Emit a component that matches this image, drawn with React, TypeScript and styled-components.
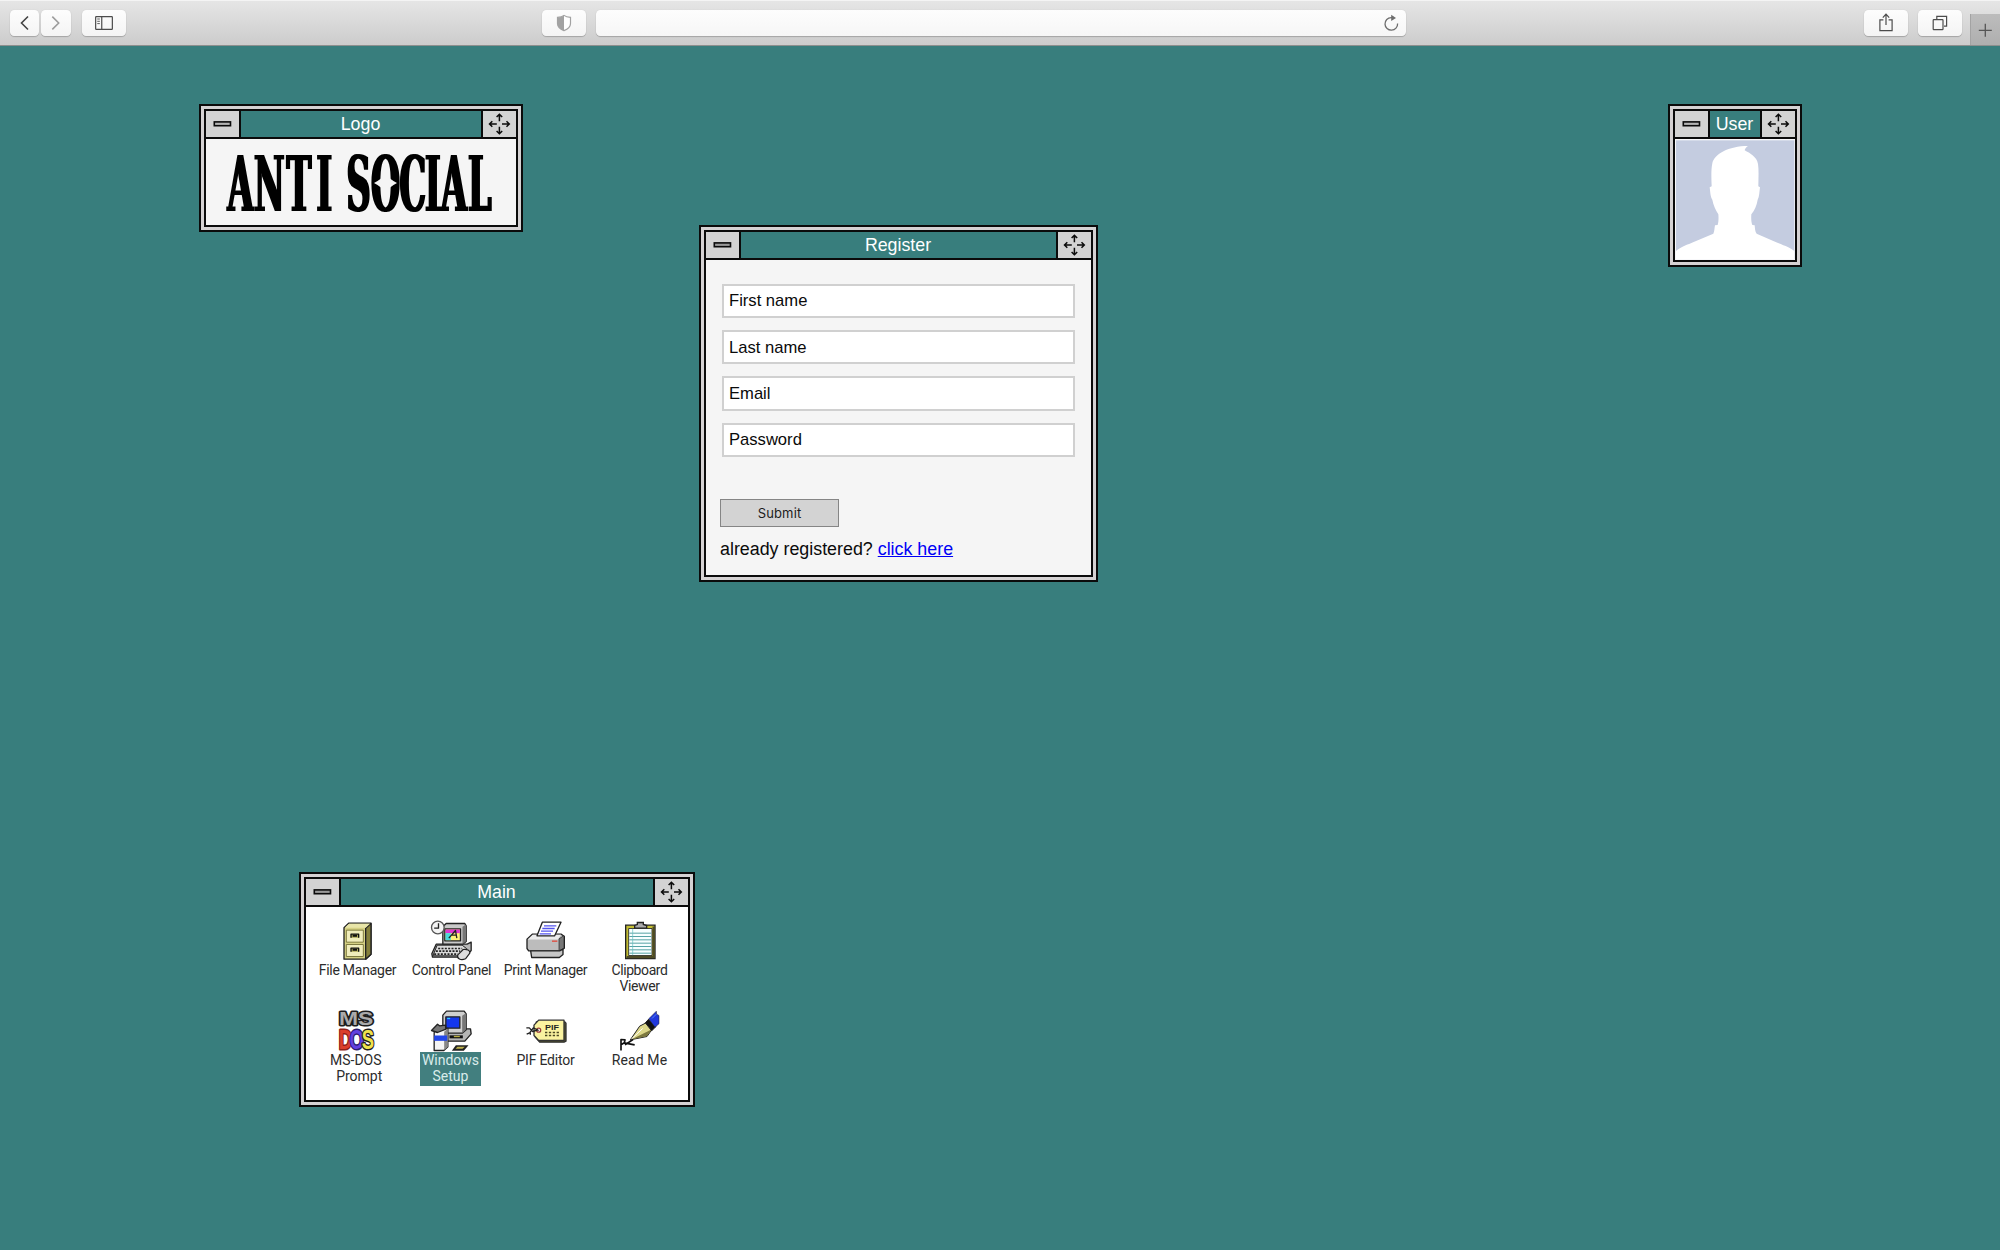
import React from 'react';
import styled, { createGlobalStyle } from 'styled-components';

const TEAL = '#387e7d';
const SILVER = '#d3d3d3';

const GlobalStyle = createGlobalStyle`
  *, *::before, *::after { box-sizing: border-box; }
  html, body { margin: 0; padding: 0; background: ${TEAL}; }
  body { font-family: 'Liberation Sans', Arial, sans-serif; }
`;

const Screen = styled.div`
  display: flex;
  flex-direction: column;
  width: 2000px;
  height: 1250px;
  overflow: hidden;
  background: ${TEAL};
`;

/* ---------- Browser toolbar ---------- */

const Toolbar = styled.header`
  display: flex;
  flex: none;
  height: 46px;
  padding: 10px 0 0 10px;
  background: linear-gradient(#e6e6e6, #cccccc);
  border-bottom: 1px solid #8d8f8e;
  box-shadow: inset 0 1px 0 #f4f4f4;
`;

const Group = styled.div<{ $width?: number; $gap: number }>`
  display: flex;
  flex: none;
  gap: ${p => p.$gap}px;
  width: ${p => (p.$width ? `${p.$width}px` : 'auto')};
`;

const ToolButton = styled.button<{ $width: number; $push?: number }>`
  display: block;
  flex: none;
  width: ${p => p.$width}px;
  height: 26px;
  margin: 0 0 0 ${p => p.$push ?? 0}px;
  padding: 0;
  border: 0;
  border-radius: 4.5px;
  background: linear-gradient(#fdfdfd, #f4f4f4);
  box-shadow: 0 1px 1px rgba(0, 0, 0, 0.2), 0 0 1px rgba(0, 0, 0, 0.15);
  svg { display: block; width: 100%; height: 100%; }
`;

const AddressBar = styled.div`
  display: flex;
  flex: none;
  justify-content: flex-end;
  width: 810px;
  height: 26px;
  border-radius: 4.5px;
  background: linear-gradient(#fdfdfd, #f6f6f6);
  box-shadow: 0 1px 1px rgba(0, 0, 0, 0.2), 0 0 1px rgba(0, 0, 0, 0.15);
  svg { width: 30px; height: 26px; }
`;

const NewTab = styled.button`
  width: 30px;
  height: 31px;
  margin: 4px 0 0 8.5px;
  padding: 0;
  border: 0;
  border-left: 1px solid #a3a3a3;
  background: linear-gradient(#bcbcbc, #afafaf);
  svg { display: block; }
`;

function BrowserBar() {
  return (
    <Toolbar>
      <Group $width={531.5} $gap={2}>
        <ToolButton $width={29} aria-label="Back">
          <svg viewBox="0 0 29 26"><path d="M18 6.5 11.5 13 18 19.5" fill="none" stroke="#444" strokeWidth="1.6" /></svg>
        </ToolButton>
        <ToolButton $width={29.5} aria-label="Forward">
          <svg viewBox="0 0 30 26"><path d="M11.5 6.5 18 13 11.5 19.5" fill="none" stroke="#9c9c9c" strokeWidth="1.6" /></svg>
        </ToolButton>
        <ToolButton $width={43.5} $push={9.5} aria-label="Sidebar">
          <svg viewBox="0 0 43 26" fill="none" stroke="#4c4c4c" strokeWidth="1.2">
            <rect x="13.4" y="6.6" width="16.7" height="12.8" rx=".6" />
            <path d="M19.5 6.6V19.4" />
            <path d="M15 9H17.6M15 11.3H17.6M15 13.6H17.6" strokeWidth=".9" />
          </svg>
        </ToolButton>
      </Group>
      <Group $gap={10} $width={1322}>
        <ToolButton $width={44} aria-label="Privacy report">
          <svg viewBox="0 0 44 26">
            <path d="M22 5.4C20.2 6.8 17.8 7.2 15.5 7.3V13.4C15.5 17.2 18.8 19.3 22 20.6 25.2 19.3 28.5 17.2 28.5 13.4V7.3C26.2 7.2 23.8 6.8 22 5.4Z" fill="#fff" stroke="#a2a2a2" strokeWidth="1.2" />
            <path d="M22 5.4C20.2 6.8 17.8 7.2 15.5 7.3V13.4C15.5 17.2 18.8 19.3 22 20.6Z" fill="#a2a2a2" />
          </svg>
        </ToolButton>
        <AddressBar>
          <svg viewBox="0 0 30 26">
            <path d="M16.6 7.6H15.2A6.3 6.3 0 1 0 21.6 13.5" fill="none" stroke="#6e6e6e" strokeWidth="1.3" />
            <path d="M15.2 4.7 20 7.9 15.2 11Z" fill="#6e6e6e" />
          </svg>
        </AddressBar>
      </Group>
      <Group $gap={10}>
        <ToolButton $width={44} aria-label="Share">
          <svg viewBox="0 0 44 26" fill="none" stroke="#4c4c4c" strokeWidth="1.2">
            <path d="M19.4 9.8H15.9V20.6H28.1V9.8H24.6M22 15V4.6M18.8 7.6 22 4.2 25.2 7.6" />
          </svg>
        </ToolButton>
        <ToolButton $width={44} aria-label="Tab overview">
          <svg viewBox="0 0 44 26" fill="none" stroke="#4c4c4c" strokeWidth="1.2">
            <rect x="15.2" y="9.6" width="9.8" height="10" rx=".6" />
            <path d="M18.8 9V6.4H28.6V16.2H26" />
          </svg>
        </ToolButton>
      </Group>
      <NewTab aria-label="New tab">
        <svg width="29" height="31" viewBox="0 0 29 31"><path d="M14.3 9.8V22.8M7.8 16.3H20.8" stroke="#555" strokeWidth="1.3" /></svg>
      </NewTab>
    </Toolbar>
  );
}

/* ---------- Windows ---------- */

const Desktop = styled.main`
  position: relative;
  flex: 1;
`;

const Frame = styled.section<{ $x: number; $y: number; $w: number; $h: number }>`
  position: absolute;
  left: ${p => p.$x}px;
  top: ${p => p.$y - 46}px;
  width: ${p => p.$w}px;
  height: ${p => p.$h}px;
  padding: 3px;
  border: 2px solid #0b0b0b;
  background: #d5d2d3;
`;

const Pane = styled.div<{ $bg: string }>`
  display: flex;
  flex-direction: column;
  height: 100%;
  border: 2px solid #0b0b0b;
  background: ${p => p.$bg};
`;

const TitleBar = styled.div`
  display: flex;
  flex: none;
  height: 28px;
  border-bottom: 2px solid #0b0b0b;
  background: ${TEAL};
`;

const Title = styled.h2`
  flex: 1;
  margin: 0;
  padding-right: 1px;
  color: #fff;
  font-size: 17.8px;
  font-weight: 400;
  line-height: 26px;
  text-align: center;
`;

const TitleButton = styled.button<{ $side: 'left' | 'right' }>`
  flex: none;
  width: 35px;
  height: 26px;
  padding: 0;
  border: 0 solid #0b0b0b;
  border-${p => (p.$side === 'left' ? 'right' : 'left')}-width: 2px;
  background: ${SILVER};
  svg { display: block; }
`;

type WindowProps = {
  title: string;
  x: number;
  y: number;
  w: number;
  h: number;
  bg?: string;
  dash?: string;
  children: React.ReactNode;
};

function Window({ title, x, y, w, h, bg = '#f5f5f5', dash = '#b5b5b5', children }: WindowProps) {
  return (
    <Frame $x={x} $y={y} $w={w} $h={h}>
      <Pane $bg={bg}>
        <TitleBar>
          <TitleButton $side="left" aria-label="Minimise">
            <svg width="33" height="26" viewBox="0 0 33 26">
              <rect x="8.3" y="10.9" width="16.2" height="3.8" fill={dash} stroke="#0b0b0b" strokeWidth="1.6" />
            </svg>
          </TitleButton>
          <Title>{title}</Title>
          <TitleButton $side="right" aria-label="Move">
            <svg width="33" height="26" viewBox="0 0 33 26" fill="none" stroke="#0b0b0b" strokeWidth="1.5">
              <path d="M16.4 10.3V3.4M13.6 6 16.4 3.2 19.2 6M16.4 15.7V22.6M13.6 20 16.4 22.8 19.2 20M13.8 13H6.7M9.3 10.2 6.5 13 9.3 15.8M19 13H26.1M23.5 10.2 26.3 13 23.5 15.8" />
            </svg>
          </TitleButton>
        </TitleBar>
        {children}
      </Pane>
    </Frame>
  );
}

/* ---------- Logo ---------- */

const LogoArt = styled.svg`
  display: block;
  width: 310px;
  height: 86px;
  overflow: visible;
`;

const LogoText = styled.text`
  font-family: 'DejaVu Serif', 'Liberation Serif', serif;
  font-weight: 700;
  font-size: 76px;
  fill: #000;
`;

const LOGO_SCALE = 0.44;
const LETTER_X = [21.5, 48, 80.5, 110.5, 128, 140.5, 165, 193.5, 219, 235, 262].map(v => v / LOGO_SCALE);

function Logo() {
  return (
    <LogoArt viewBox="0 0 310 86">
      <defs>
        <filter id="embolden" x="-5%" y="-5%" width="110%" height="110%">
          <feMorphology operator="dilate" radius="1.2 0.1" />
        </filter>
      </defs>
      <g transform={`scale(${LOGO_SCALE} 1)`}>
        <LogoText x={LETTER_X.join(' ')} y="72" filter="url(#embolden)">ANTI SOCIAL</LogoText>
      </g>
      <path d="M168 44Q176 40 179.5 34Q183 40 191 44Q183 48 179.5 54Q176 48 168 44Z" fill="#f5f5f5" />
    </LogoArt>
  );
}

/* ---------- User ---------- */

const Avatar = styled.svg`
  display: block;
  width: 120px;
  height: 121px;
`;

function UserPicture() {
  return (
    <Avatar viewBox="45 132 360 363">
      <rect x="45" y="132" width="360" height="363" fill="#f8f8fa" />
      <rect x="48" y="136" width="355" height="356" fill="#c4cce0" />
      <path
        fill="#fff"
        d="M48 492V468C60 456 80 450 110 437L160 416C164 408 163 400 165 391L173 390C176 379 176 370 175 358C167 345 160 330 157 314C151 306 151 291 149 277L155 274C154 250 153 225 157 205C163 177 205 153 264 153C259 156 255 161 254 166C270 175 290 185 294 207C297 228 295 252 295 274L300 277C298 291 298 306 293 314C290 332 284 346 274 358C273 371 274 382 277 390L284 391C285 401 285 410 290 416L340 438C371 451 391 457 403 468V492Z"
      />
    </Avatar>
  );
}

/* ---------- Register ---------- */

const Form = styled.form`
  display: flex;
  flex-direction: column;
  align-items: flex-start;
  padding: 23.6px 14px 0;
`;

const Field = styled.input`
  display: block;
  width: 353px;
  height: 34.4px;
  margin: 0 0 12px 2px;
  padding: 1px 5px 0;
  border: 2px solid #d0d0d0;
  border-radius: 0;
  background: #fff;
  font: 16.6px 'Liberation Sans', Arial, sans-serif;
  &::placeholder { color: #0a0a0a; opacity: 1; }
`;

const Submit = styled.button`
  width: 119px;
  height: 28px;
  margin-top: 29.4px;
  padding: 1px 0 0;
  border: 1px solid #858585;
  background: ${SILVER};
  color: #1c1c1c;
  font: 13px Inter, sans-serif;
  letter-spacing: 0.15px;
`;

const Note = styled.p`
  margin: 12px 0 0;
  color: #0a0a0a;
  font-size: 17.85px;
  line-height: 20px;
  white-space: nowrap;
  a { color: #0000f5; text-decoration: underline; text-decoration-thickness: 1px; }
`;

function RegisterForm() {
  return (
    <Form onSubmit={e => e.preventDefault()}>
      <Field placeholder="First name" />
      <Field placeholder="Last name" />
      <Field placeholder="Email" />
      <Field placeholder="Password" />
      <Submit type="submit">Submit</Submit>
      <Note>already registered? <a href="#login">click here</a></Note>
    </Form>
  );
}

/* ---------- Program group ---------- */

const Programs = styled.div`
  display: grid;
  grid-template-columns: repeat(4, 94px);
  grid-auto-rows: 90px;
  padding: 11.5px 0 0 5px;
`;

const Program = styled.div`
  display: flex;
  flex-direction: column;
  align-items: center;
  svg { display: block; flex: none; width: 44px; height: 44px; overflow: visible; }
`;

const Label = styled.span<{ $active?: boolean; $track?: number }>`
  margin: -1px ${p => (p.$active ? 3 : 1)}px 0 0;
  padding: 0 ${p => (p.$active ? 2 : 0)}px 2px;
  background: ${p => (p.$active ? '#427f7f' : 'transparent')};
  color: ${p => (p.$active ? '#d9eceb' : '#2c2c2c')};
  font: 14px/16.3px Roboto, sans-serif;
  letter-spacing: ${p => p.$track ?? 0}px;
  text-align: center;
  white-space: pre;
`;

const IconText = styled.text<{ $size: number }>`
  font-family: 'Liberation Sans', Arial, sans-serif;
  font-weight: 700;
  font-size: ${p => p.$size}px;
`;

const FileCabinet = () => (
  <svg viewBox="138 160.5 132 132" stroke="#222" strokeWidth="4" strokeLinejoin="round">
    <path d="M162 187 176 173H243V266L227 281H162Z" fill="#d5d184" />
    <path d="M227 188 243 174V266L227 281Z" fill="#85803c" />
    <path d="M164 187 177 175H240L227 187Z" fill="#e8e5a8" stroke="none" />
    <g strokeWidth="2.5" fill="#f0edbc" stroke="#6b672c">
      <rect x="169" y="194" width="51" height="36" />
      <rect x="169" y="237" width="51" height="36" />
    </g>
    <path d="M183 217V206H206V217M183 259V248H206V259" fill="#aaa655" stroke="#111" />
    <path d="M188 211H201M188 253H201" stroke="#111" strokeWidth="6" />
  </svg>
);

const ControlPanel = () => (
  <svg viewBox="421.5 160.5 132 132" stroke="#222" strokeWidth="4" strokeLinejoin="round">
    <path d="M440 236H533L545 230V255L528 275H429L427 265Z" fill="#b8b8b8" />
    <path d="M460 184 470 174H526L530 181V228L519 236H460Z" fill="#c9c9c9" />
    <path d="M519 184 529 177V228L519 236Z" fill="#777" stroke="none" />
    <rect x="466" y="190" width="47" height="36" fill="#fff27a" />
    <path d="M468 192H511V203H468Z" fill="#df35d4" stroke="none" />
    <path d="M468 203H484V224H468Z" fill="#49d9dc" stroke="none" />
    <path d="M478 218 498 195 502 218M487 209H500" fill="none" />
    <path d="M443 239H518L532 250 513 271H430Z" fill="#dadada" strokeWidth="3" />
    <path d="M446 249H518M439 257H512M434 266H505" strokeDasharray="6 4" strokeWidth="5" />
    <path d="M505 268 521 252C533 250 542 255 541 263L528 280C514 286 501 280 505 268Z" fill="#ddd" strokeWidth="3.5" />
    <circle cx="445" cy="186" r="19" fill="#f4f4f4" stroke="#555" />
    <path d="M447 173V188H434" fill="none" />
  </svg>
);

const Printer = () => (
  <svg viewBox="102 160.5 132 132" stroke="#222" strokeWidth="4" strokeLinejoin="round">
    <path d="M111 221 127 206H214L223 213V248L208 256H116L111 249Z" fill="#bcbcbc" />
    <path d="M113 222 128 208H213L204 222Z" fill="#ececec" stroke="none" />
    <path d="M207 220 222 210V248L207 257Z" fill="#777" strokeWidth="2" />
    <path d="M141 211 157 170H213L194 211Z" fill="#fff" />
    <path d="M162 181H199M157 189H194M153 197H189M149 205H183" stroke="#5555ee" />
    <path d="M122 256H209L219 251V267L208 276H125Z" fill="#c6c6c6" />
    <path d="M186 227H202" stroke="#e04a3d" />
  </svg>
);

const Clipboard = () => (
  <svg viewBox="384 160.5 132 132" stroke="#222" strokeWidth="4">
    <path d="M407 179H495V279H407Z" fill="#c3bd32" />
    <path d="M491 183V275H410" stroke="#4d4b25" strokeWidth="7" fill="none" />
    <path d="M416 189H486V270H416Z" fill="#f7ffff" strokeWidth="2.5" />
    <path d="M418 203H484M418 213H484M418 223H484M418 233H484M418 243H484M418 253H484M418 263H484" stroke="#56a3a5" strokeWidth="3" />
    <path d="M428 190V269" stroke="#63bcbe" strokeWidth="2" />
    <path d="M434 188V180L442 177V171H460V177L470 180V188Z" fill="#aaa" />
  </svg>
);

const MsDos = () => (
  <svg viewBox="138 25.5 132 132" strokeLinejoin="round">
    <g stroke="#1d1d1d" strokeWidth="9" paintOrder="stroke">
      <IconText $size={57} x="147" y="74" fill="#aaa" textLength="103" lengthAdjust="spacingAndGlyphs">MS</IconText>
      <g transform="translate(146 145) scale(.66 1)">
        <IconText $size={84} x="0 49 105" y="0">
          <tspan fill="#db3e2c" stroke="#8f1f18">D</tspan>
          <tspan fill="#6241df" stroke="#2c1c6e">O</tspan>
          <tspan fill="#efe24c">S</tspan>
        </IconText>
      </g>
    </g>
  </svg>
);

const WindowsSetup = () => (
  <svg viewBox="421.5 25.5 132 132" stroke="#222" strokeWidth="4" strokeLinejoin="round">
    <path d="M461 97 475 85H543L545 100 526 122H461Z" fill="#b5b5b5" />
    <path d="M460 44 471 32H524L530 40V88L518 98H460Z" fill="#cfcfcf" />
    <path d="M518 46 529 38V88L518 98Z" fill="#777" stroke="none" />
    <rect x="469" y="49" width="42" height="34" fill="#1437ed" />
    <path d="M473 54H482" stroke="#2fd2ff" />
    <path d="M480 109H520" stroke="#111" strokeWidth="9" />
    <path d="M493 108H511" stroke="#b8ad42" />
    <path d="M434 96 442 84H475V139L463 150H434Z" fill="#f4f4f4" />
    <path d="M464 94 475 84V139L464 149Z" fill="#888" stroke="none" />
    <path d="M434 105H473V121H434Z" fill="#2347e9" stroke="none" />
    <path d="M426 90 444 71 450 76 468 74 469 86 444 96Z" fill="#777" />
    <path d="M499 134H537L523 151H487Z" fill="#222" stroke="none" />
    <path d="M504 139H526L519 145H498Z" fill="#bfb34c" stroke="none" />
  </svg>
);

const PifTag = () => (
  <svg viewBox="102 25.5 132 132" stroke="#333" strokeWidth="4" strokeLinejoin="round">
    <path d="M139 64H224L228 68V122L222 125H149L136 110Z" fill="#59582a" />
    <path d="M132 74 146 59H222V120H146L132 105Z" fill="#faf3a0" />
    <circle cx="146" cy="89" r="6" fill="#fff" stroke="#963d38" />
    <path d="M109 82H118L128 93 144 88M110 101 119 97 130 82 146 90M121 97V103" fill="none" stroke="#222" />
    <IconText $size={23} x="165" y="87" fill="#222" stroke="none" textLength="42" lengthAdjust="spacingAndGlyphs">PIF</IconText>
    <path d="M165 96H207M165 105H207" strokeDasharray="7 4.6" strokeWidth="5" stroke="#4b4822" />
  </svg>
);

const Pen = () => (
  <svg viewBox="384 25.5 132 132" stroke="#222" strokeWidth="3" strokeLinejoin="round">
    <path d="M421 118 449 77 470 66 488 84 471 108Z" fill="#ddd88b" />
    <path d="M424 117 486 86 470 107Z" fill="#7d793f" stroke="none" />
    <path d="M424 116 458 84" stroke="#fff" />
    <path d="M466 67 476 56 498 78 485 91Z" fill="#111" />
    <path d="M476 55 499 32 500 41 507 45V70L495 80Z" fill="#2138dc" strokeWidth="1.5" />
    <path d="M486 54 499 41" stroke="#5485f3" />
    <path d="M393 150V117L405 118 403 127 393 133M402 127 434 133M405 133 429 117" fill="none" stroke="#111" strokeWidth="5" />
  </svg>
);

const programs: { label: string; icon: React.FC; active?: boolean; track?: number }[] = [
  { label: 'File Manager', icon: FileCabinet, track: -0.25 },
  { label: 'Control Panel', icon: ControlPanel, track: -0.35 },
  { label: 'Print Manager', icon: Printer, track: -0.35 },
  { label: 'Clipboard\nViewer', icon: Clipboard, track: -0.4 },
  { label: 'MS-DOS \n Prompt', icon: MsDos },
  { label: 'Windows\nSetup', icon: WindowsSetup, active: true, track: 0 },
  { label: 'PIF Editor', icon: PifTag, track: -0.2 },
  { label: 'Read Me', icon: Pen, track: 0.1 },
];

export default function App() {
  return (
    <>
      <GlobalStyle />
      <Screen>
        <BrowserBar />
        <Desktop>
          <Window title="Logo" x={199} y={104} w={324} h={128}><Logo /></Window>
          <Window title="User" x={1668} y={104} w={134} h={163}><UserPicture /></Window>
          <Window title="Register" x={699} y={225} w={399} h={357} dash="#999"><RegisterForm /></Window>
          <Window title="Main" x={299} y={872} w={396} h={235} bg="#fff" dash="#999">
            <Programs>
              {programs.map(({ label, icon: Icon, active, track }) => (
                <Program key={label}>
                  <Icon />
                  <Label $active={active} $track={track}>{label}</Label>
                </Program>
              ))}
            </Programs>
          </Window>
        </Desktop>
      </Screen>
    </>
  );
}
